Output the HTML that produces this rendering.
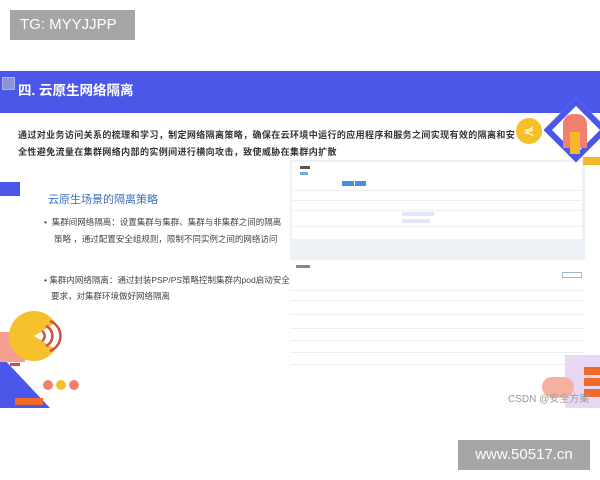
<!DOCTYPE html>
<html><head><meta charset="utf-8"><style>
*{margin:0;padding:0;box-sizing:border-box}
body{width:600px;height:480px;background:#fff;position:relative;overflow:hidden;font-family:"Liberation Sans","Noto Sans CJK SC",sans-serif}
.a{position:absolute}
.t{color:#333;font-size:9px;letter-spacing:0.38px;font-weight:bold;white-space:nowrap}
.b{color:#444;font-size:8.5px;white-space:nowrap}
.row{position:absolute;left:0;right:0;height:1px;background:#eee}
.s{position:absolute;height:3px;background:#ccc}
</style></head><body>
<div class="a" style="left:0;top:71px;width:600px;height:42px;background:#4b57e8"></div>
<div class="a" style="left:2px;top:77px;width:13px;height:13px;background:#8c93d8;border:1px solid #b0b4e8"></div>
<div class="a" style="left:18px;top:79px;color:#fff;font-size:13.5px;font-weight:bold">四. 云原生网络隔离</div>
<div class="a t" style="left:18px;top:128px">通过对业务访问关系的梳理和学习，制定网络隔离策略，确保在云环境中运行的应用程序和服务之间实现有效的隔离和安</div>
<div class="a t" style="left:18px;top:145px">全性避免流量在集群网络内部的实例间进行横向攻击，致使威胁在集群内扩散</div>
<div class="a" style="left:0;top:182px;width:20px;height:14px;background:#4b57e8"></div>
<div class="a" style="left:48px;top:191px;color:#3b6fc4;font-size:11px">云原生场景的隔离策略</div>
<div class="a b" style="left:44px;top:216px">•&nbsp; 集群间网络隔离：设置集群与集群、集群与非集群之间的隔离</div>
<div class="a b" style="left:54px;top:233px">策略 ，通过配置安全组规则，限制不同实例之间的网络访问</div>
<div class="a b" style="left:44px;top:274px">• 集群内网络隔离：通过封装PSP/PS策略控制集群内pod启动安全</div>
<div class="a b" style="left:51px;top:290px">要求，对集群环境做好网络隔离</div>
<!-- screenshot panel -->
<div class="a" style="left:290px;top:160px;width:295px;height:100px;background:#eef1f6">
 <div class="a" style="left:2px;top:2px;width:290px;height:77px;background:#fff">
  <div class="s" style="left:8px;top:4px;width:10px;background:#555"></div>
  <div class="s" style="left:8px;top:10px;width:8px;background:#7aa8e0"></div>
  <div class="a" style="left:50px;top:19px;width:12px;height:5px;background:#4a8ee0"></div>
  <div class="a" style="left:63px;top:19px;width:11px;height:5px;background:#4a8ee0"></div>
  <div class="row" style="top:28px"></div><div class="row" style="top:38px"></div><div class="row" style="top:48px"></div><div class="row" style="top:64px"></div>
  <div class="a" style="left:110px;top:50px;width:32px;height:4px;background:#dde9fa"></div>
  <div class="a" style="left:110px;top:57px;width:28px;height:4px;background:#dde9fa"></div>
 </div>
</div>
<div class="a" style="left:290px;top:262px;width:295px;height:115px;background:#fff">
 <div class="s" style="left:6px;top:3px;width:14px;background:#888"></div>
 <div class="a" style="left:272px;top:10px;width:20px;height:6px;border:1px solid #9bc"></div>
 <div class="row" style="top:28px"></div><div class="row" style="top:38px"></div><div class="row" style="top:52px"></div><div class="row" style="top:66px"></div><div class="row" style="top:78px"></div><div class="row" style="top:90px"></div><div class="row" style="top:102px"></div>
</div>
<!-- top right deco -->
<div class="a" style="left:516px;top:118px;width:26px;height:26px;border-radius:50%;background:#f5c02a;color:#fff;font-size:13px;text-align:center;line-height:26px">⋞</div>
<div class="a" style="left:553px;top:107px;width:46px;height:46px;border:6px solid #4b57e8;transform:rotate(45deg);background:#fff"></div>
<div class="a" style="left:563px;top:114px;width:24px;height:34px;background:#f28070;border-radius:10px 10px 0 0"></div>
<div class="a" style="left:570px;top:132px;width:10px;height:22px;background:#f5b82a"></div>
<div class="a" style="left:583px;top:157px;width:17px;height:8px;background:#f5b82a"></div>
<!-- bottom left deco -->
<svg class="a" style="left:0;top:300px" width="90" height="108">
<polygon points="0,55 0,108 50,108" fill="#4b57e8"/>
<rect x="0" y="32" width="25" height="30" fill="#f5a090"/>
<circle cx="34" cy="36" r="25" fill="#f5c02a"/>
<polygon points="34,36 60,20 60,52" fill="#fff"/>
<path d="M42,31 a6,6 0 0 1 0,10 M46,26 a11,11 0 0 1 0,20 M50,21 a16,16 0 0 1 0,30" stroke="#d05040" stroke-width="2.5" fill="none"/>
<rect x="10" y="63" width="10" height="3" fill="#d05040"/>
<circle cx="48" cy="85" r="5" fill="#f28070"/><circle cx="61" cy="85" r="5" fill="#f5c02a"/><circle cx="74" cy="85" r="5" fill="#f28070"/>
<rect x="15" y="98" width="28" height="7" fill="#f06a2a"/>
</svg>
<!-- bottom right deco -->
<div class="a" style="left:565px;top:355px;width:35px;height:53px;background:#e8d8f4"></div>
<div class="a" style="left:542px;top:377px;width:32px;height:20px;border-radius:10px;background:#f6b0a0"></div>
<div class="a" style="left:584px;top:367px;width:16px;height:8px;background:#f06a2a"></div>
<div class="a" style="left:584px;top:378px;width:16px;height:8px;background:#f06a2a"></div>
<div class="a" style="left:584px;top:389px;width:16px;height:8px;background:#f06a2a"></div>
<div class="a" style="left:508px;top:390px;color:#999;font-size:10px">CSDN @安全方案</div>
<!-- overlays -->
<div class="a" style="left:10px;top:10px;width:125px;height:30px;background:#a6a6a6;color:#fff;font-size:15px;line-height:30px;padding-left:10px">TG: MYYJJPP</div>
<div class="a" style="left:458px;top:440px;width:132px;height:30px;background:#a6a6a6;color:#fff;font-size:15px;line-height:30px;text-align:center">www.50517.cn</div>
</body></html>
